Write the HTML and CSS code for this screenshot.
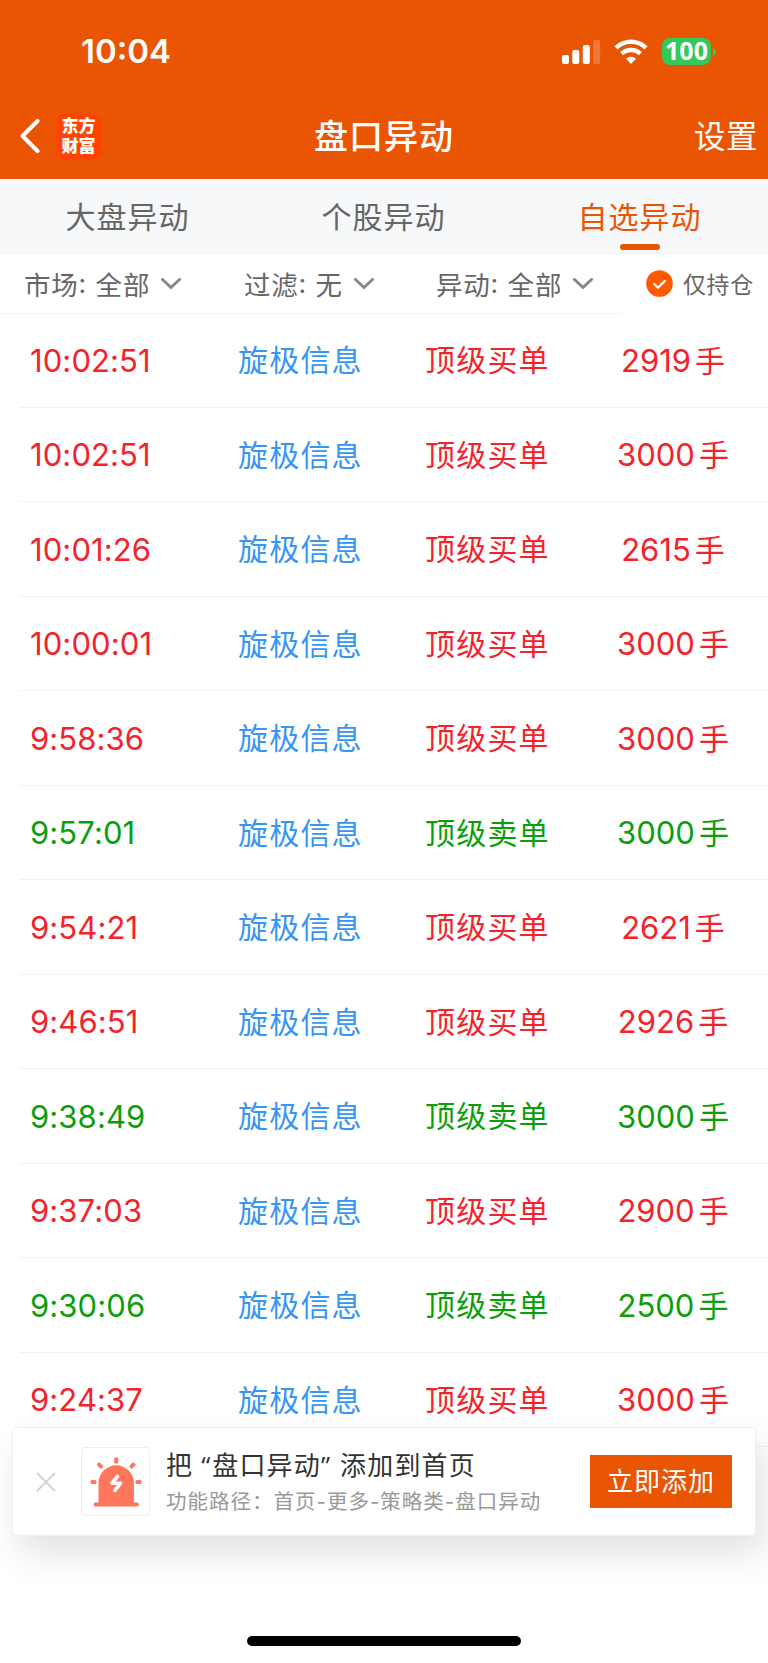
FILE: index.html
```
<!DOCTYPE html>
<html lang="zh-CN">
<head>
  <meta charset="UTF-8">
  <title>盘口异动</title>
  <meta name="viewport" content="width=device-width, initial-scale=1.0">
  <link rel="stylesheet" href="styles.css">
</head>
<body>
  <header class="header">
    <div class="status-bar">
      <span class="clock">10:04</span>
      <div class="status-icons">
        <svg class="signal" width="40" height="26" viewBox="0 0 40 26" fill="#fff">
          <rect x="1" y="16" width="7" height="9" rx="2"/>
          <rect x="11.3" y="11" width="7" height="14" rx="2"/>
          <rect x="21.8" y="6" width="7" height="19" rx="2"/>
          <rect x="32.2" y="1" width="7" height="24" rx="2" opacity="0.2"/>
        </svg>
        <svg class="wifi" width="34" height="26" viewBox="0 0 34 26" fill="none" stroke="#fff" stroke-width="4.4">
          <path d="M2 8.8a21.6 21.6 0 0 1 30 0"/>
          <path d="M7.6 14.7a13.6 13.6 0 0 1 18.8 0"/>
          <path d="M17 25l-5-5.2a7.4 7.4 0 0 1 10 0z" fill="#fff" stroke="none"/>
        </svg>
        <div class="battery">100</div>
        <svg class="battery-tip" width="4" height="8" viewBox="0 0 4 8"><path d="M0 0c4 1 4 7 0 8z" fill="#34c759"/></svg>
      </div>
    </div>
    <div class="nav">
      <div class="nav-left">
        <svg width="20" height="34" viewBox="0 0 20 34" fill="none" stroke="#fff" stroke-width="4" stroke-linecap="round" stroke-linejoin="round"><path d="M17.5 2L2.5 17l15 15"/></svg>
        <div class="logo">东方财富</div>
      </div>
      <h1>盘口异动</h1>
      <span class="setting">设置</span>
    </div>
  </header>

  <nav class="tabs">
    <span class="tab">大盘异动</span>
    <span class="tab">个股异动</span>
    <span class="tab active">自选异动</span>
  </nav>

  <div class="filters">
    <div class="filter market">市场<i>:</i>全部 <svg class="arrow" viewBox="0 0 20 12"><path d="M1.5 1.5L10 9.5l8.500-8"/></svg></div>
    <div class="filter sieve">过滤<i>:</i>无 <svg class="arrow" viewBox="0 0 20 12"><path d="M1.5 1.5L10 9.5l8.500-8"/></svg></div>
    <div class="filter change">异动<i>:</i>全部 <svg class="arrow" viewBox="0 0 20 12"><path d="M1.5 1.5L10 9.5l8.500-8"/></svg></div>
    <div class="only-hold">
      <svg width="27" height="27" viewBox="0 0 27 27"><circle cx="13.500" cy="13.500" r="13.300" fill="#ff5a00"/><path d="M8 13.800l4 4 7-7" fill="none" stroke="#fff" stroke-width="2.200" stroke-linecap="round" stroke-linejoin="round"/></svg>
      <span>仅持仓</span>
    </div>
  </div>

  <main class="list">
    <div class="row buy"><span class="time">10:02:51</span><span class="name">旋极信息</span><span class="type">顶级买单</span><span class="num">2919<b>手</b></span></div>
    <div class="row buy"><span class="time">10:02:51</span><span class="name">旋极信息</span><span class="type">顶级买单</span><span class="num">3000<b>手</b></span></div>
    <div class="row buy"><span class="time">10:01:26</span><span class="name">旋极信息</span><span class="type">顶级买单</span><span class="num">2615<b>手</b></span></div>
    <div class="row buy"><span class="time">10:00:01</span><span class="name">旋极信息</span><span class="type">顶级买单</span><span class="num">3000<b>手</b></span></div>
    <div class="row buy"><span class="time">9:58:36</span><span class="name">旋极信息</span><span class="type">顶级买单</span><span class="num">3000<b>手</b></span></div>
    <div class="row sell"><span class="time">9:57:01</span><span class="name">旋极信息</span><span class="type">顶级卖单</span><span class="num">3000<b>手</b></span></div>
    <div class="row buy"><span class="time">9:54:21</span><span class="name">旋极信息</span><span class="type">顶级买单</span><span class="num">2621<b>手</b></span></div>
    <div class="row buy"><span class="time">9:46:51</span><span class="name">旋极信息</span><span class="type">顶级买单</span><span class="num">2926<b>手</b></span></div>
    <div class="row sell"><span class="time">9:38:49</span><span class="name">旋极信息</span><span class="type">顶级卖单</span><span class="num">3000<b>手</b></span></div>
    <div class="row buy"><span class="time">9:37:03</span><span class="name">旋极信息</span><span class="type">顶级买单</span><span class="num">2900<b>手</b></span></div>
    <div class="row sell"><span class="time">9:30:06</span><span class="name">旋极信息</span><span class="type">顶级卖单</span><span class="num">2500<b>手</b></span></div>
    <div class="row buy"><span class="time">9:24:37</span><span class="name">旋极信息</span><span class="type">顶级买单</span><span class="num">3000<b>手</b></span></div>
  </main>

  <!-- 底部浮层 -->
  <div class="toast">
    <svg class="close" width="20" height="20" viewBox="0 0 20 20" stroke="#cfd2da" stroke-width="1.800"><path d="M1 1l18 18M19 1L1 19"/></svg>
    <div class="toast-icon">
      <svg width="52" height="50" viewBox="0 0 52 50" fill="#ff765c">
        <path d="M8.500 46V26a17.700 17.700 0 0 1 35.400 0v20z"/>
        <rect x="3.500" y="45.500" width="45.500" height="4" rx="2"/>
        <rect x="24.200" y="0.500" width="4" height="6" rx="1"/>
        <rect x="0.500" y="23" width="6" height="4" rx="1.500"/>
        <rect x="45.500" y="23" width="6" height="4" rx="1.500"/>
        <rect x="7" y="6.500" width="6" height="4" rx="1" transform="rotate(47 10 8.500)"/>
        <rect x="39.500" y="6.500" width="6" height="4" rx="1" transform="rotate(-47 42.500 8.500)"/>
        <path d="M27.500 19.500L21.800 26.200h8.800L25 33.500" fill="none" stroke="#fff" stroke-width="3.600" stroke-linecap="round" stroke-linejoin="round"/>
      </svg>
    </div>
    <div class="toast-text">
      <p class="toast-title">把<q class="open">“</q>盘口异动<q>”</q>添加到首页</p>
      <p class="toast-path">功能路径：首页-更多-策略类-盘口异动</p>
    </div>
    <button class="add-btn">立即添加</button>
  </div>
  <div class="home-bar"></div>
</body>
</html>
```
FILE: styles.css
```
* {
  margin: 0;
  padding: 0;
  box-sizing: border-box;
}
body {
  width: 768px;
  height: 1663px;
  position: relative;
  overflow: hidden;
  background: #fff;
  color: #666;
  font-family: Inter, "Noto Sans CJK SC", sans-serif;
}
svg {
  display: block;
  flex-shrink: 0;
}
/* 顶部 */
.header {
  height: 179px;
  background: #ea5504;
  color: #fff;
}
.status-bar {
  height: 95px;
  padding: 8px 51px 0 81px;
  display: flex;
  align-items: center;
  justify-content: space-between;
}
.clock {
  padding-bottom: 1px;
  font-size: 33px;
  font-weight: 600;
}
.status-icons {
  display: flex;
  align-items: center;
}
.wifi {
  margin: 0 14px 0 13px;
}
.battery {
  width: 49px;
  height: 27px;
  border-radius: 8px;
  background: #34c759;
  font-family: "Noto Sans", sans-serif;
  font-size: 25px;
  font-weight: 700;
  line-height: 25px;
  text-align: center;
}
.battery-tip {
  margin-left: 2px;
}
.nav {
  height: 84px;
  padding: 0 10px 2px;
  display: grid;
  grid-template-columns: 1fr auto 1fr;
  align-items: center;
}
.nav-left {
  padding-left: 10px;
  display: flex;
  align-items: center;
  gap: 15px;
}
.logo {
  width: 47px;
  height: 47px;
  border-radius: 10px;
  background: #ff4400;
  padding: 2px 6px 0 6px;
  font-family: "Noto Sans CJK SC", sans-serif;
  font-size: 17px;
  font-weight: 900;
  line-height: 20px;
  text-align: center;
}
.nav h1 {
  padding-bottom: 4px;
  font-size: 34px;
  font-weight: 500;
  letter-spacing: 1px;
}
.setting {
  justify-self: end;
  padding-bottom: 4px;
  font-size: 31.500px;
  letter-spacing: 0.5px;
}
/* 标签 */
.tabs {
  height: 75px;
  display: flex;
  background: #f7f8fa;
  border-bottom: 1px solid #f0f1f3;
}
.tab {
  flex: 1;
  display: flex;
  flex-direction: column;
  align-items: center;
  padding: 16px 1px 0 0;
  font-size: 30px;
  letter-spacing: 1px;
  line-height: 44px;
}
.tab.active {
  color: #ea5504;
}
.tab.active::after {
  content: "";
  width: 40px;
  height: 6px;
  margin-top: 5px;
  border-radius: 3px;
  background: #ea5504;
}
/* 筛选 */
.filters {
  height: 60px;
  padding-left: 25px;
  display: flex;
}
.filter {
  display: flex;
  align-items: center;
  padding-bottom: 1px;
  font-size: 26.500px;
  letter-spacing: 0.8px;
  border-bottom: 1px solid #f4f4f4;
}
.filter i {
  width: 17px;
  font-style: normal;
}
.arrow {
  width: 20px;
  height: 12px;
  margin: 2px 0 0 11px;
  fill: none;
  stroke: #888;
  stroke-width: 3;
  stroke-linecap: round;
}
.market {
  width: 244px;
  margin-left: -25px;
  padding-left: 24px;
}
.sieve {
  width: 192px;
}
.change {
  width: 186px;
}
.only-hold {
  padding: 0 0 2px 24px;
  display: flex;
  align-items: center;
  gap: 10px;
  font-size: 23px;
  letter-spacing: 0.6px;
}
/* 列表 */
.list {
  margin-top: -1px;
}
.row {
  height: 94.5px;
  margin-left: 20px;
  padding-left: 10px;
  display: grid;
  grid-template-columns: 208px 187px 183px 130px;
  align-items: center;
  border-bottom: 1px solid #f2f2f2;
  font-size: 30px;
}
.buy {
  color: #f4222a;
}
.sell {
  color: #0a9f0a;
}
.time {
  padding-top: 1px;
  font-size: 31px;
  letter-spacing: 0.1px;
}
.name {
  color: #3795f5;
}
.name,
.type {
  padding-bottom: 3px;
  letter-spacing: 1.2px;
}
.num {
  padding-bottom: 2px;
  font-size: 31px;
  text-align: center;
}
.num b {
  margin-left: 4px;
  font-size: 30px;
  font-weight: 400;
}
/* 浮层 */
.toast {
  position: absolute;
  left: 12px;
  top: 1427px;
  width: 744px;
  height: 109px;
  padding: 0 23px 0 23px;
  display: flex;
  align-items: center;
  background: #fff;
  border: 1px solid #f0f0f0;
  border-radius: 4px;
  box-shadow: 8px 18px 36px rgba(0, 0, 0, 0.12);
}
.toast-icon {
  width: 69px;
  height: 69px;
  margin: 0 16px 0 25px;
  display: flex;
  align-items: center;
  justify-content: center;
  border: 1px solid #eee;
  border-radius: 4px;
}
.toast-text {
  flex: 1;
  padding-top: 2px;
  white-space: nowrap;
}
.toast-title {
  color: #333;
  font-size: 26px;
  letter-spacing: 1.2px;
  line-height: 38px;
}
.toast-title q {
  display: inline-block;
  width: 19px;
  font-family: "Open Sans", sans-serif;
  letter-spacing: 0;
  quotes: none;
}
.toast-title .open {
  padding-right: 2px;
  text-align: right;
}
.toast-path {
  color: #999;
  font-size: 20.500px;
  letter-spacing: 1px;
  line-height: 34px;
}
.add-btn {
  width: 142px;
  height: 53px;
  border: none;
  background: #ea5504;
  color: #fff;
  font: 26px/53px Inter, "Noto Sans CJK SC", sans-serif;
  letter-spacing: 1px;
}
.home-bar {
  position: absolute;
  left: 247px;
  top: 1636px;
  width: 274px;
  height: 10px;
  border-radius: 5px;
  background: #000;
}
```
